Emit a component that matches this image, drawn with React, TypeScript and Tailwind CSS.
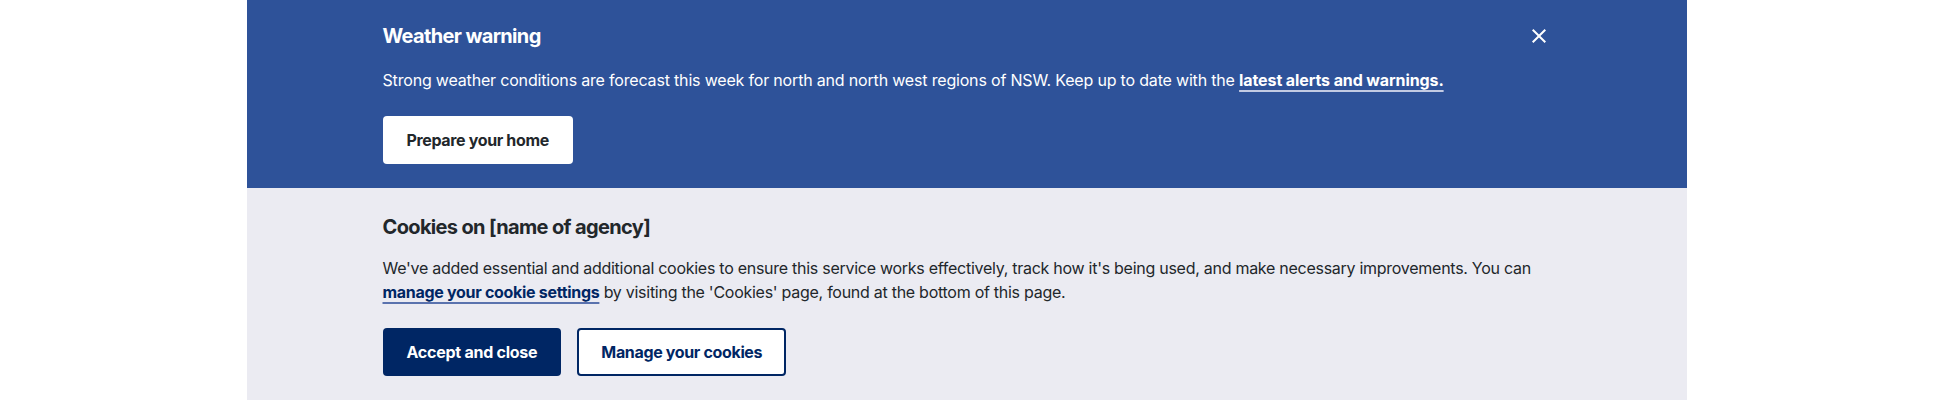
import React from "react";

function CloseIcon() {
  return (
    <svg viewBox="0 0 24 24" width="24" height="24" fill="currentColor" aria-hidden="true">
      <path d="M19 6.41L17.59 5 12 10.59 6.41 5 5 6.41 10.59 12 5 17.59 6.41 19 12 13.41 17.59 19 19 17.59 13.41 12z" />
    </svg>
  );
}

export default function App() {
  return (
    <div className="min-h-[400px] bg-white font-['Inter',sans-serif] tracking-[-0.2px] antialiased">
      <div className="mx-auto max-w-[1440px]">
        <section className="bg-[#2e5299] text-white">
          <div className="mx-auto flex max-w-[1200px] items-start gap-4 px-4 py-6">
            <div className="flex-1">
              <h2 className="text-[20px] font-bold leading-[25px] tracking-[-0.65px]">Weather warning</h2>
              <p className="mt-[19px] text-base leading-6 tracking-[-0.18px]">
                Strong weather conditions are forecast this week for north and north west regions of NSW. Keep up to date with the{" "}
                <a
                  href="#"
                  className="font-bold tracking-[-0.1px] underline decoration-[#c3cbe3] decoration-2 underline-offset-[4px]"
                >
                  latest alerts and warnings.
                </a>
              </p>
              <div className="mt-6 flex">
                <a
                  href="#"
                  className="flex h-12 items-center rounded-[4px] bg-white px-6 text-base font-bold tracking-[-0.35px] text-[#22272b]"
                >
                  Prepare your home
                </a>
              </div>
            </div>
            <button type="button" aria-label="Close" className="flex h-6 w-6 items-center justify-center text-white">
              <CloseIcon />
            </button>
          </div>
        </section>
        <section className="bg-[#ebebf2] text-[#22272b]">
          <div className="mx-auto max-w-[1200px] px-4 pb-6 pt-[27px]">
            <h2 className="text-[20px] font-bold leading-[25px] tracking-[-0.65px]">Cookies on [name of agency]</h2>
            <p className="mt-4 text-base leading-6 tracking-[-0.27px]">
              We've added essential and additional cookies to ensure this service works effectively, track how it's being used, and make necessary improvements. You can{" "}
              <a
                href="#"
                className="font-bold tracking-[-0.3px] text-[#002664] underline decoration-[#5a72ae] decoration-2 underline-offset-[4px]"
              >
                manage your cookie settings
              </a>{" "}
              by visiting the 'Cookies' page, found at the bottom of this page.
            </p>
            <div className="mt-6 flex gap-4">
              <button
                type="button"
                className="flex h-12 items-center rounded-[4px] bg-[#002664] px-6 text-base font-bold tracking-[-0.25px] text-white"
              >
                Accept and close
              </button>
              <button
                type="button"
                className="flex h-12 items-center rounded-[4px] border-2 border-[#002664] bg-white px-[22px] text-base font-bold tracking-[-0.35px] text-[#002664]"
              >
                Manage your cookies
              </button>
            </div>
          </div>
        </section>
      </div>
    </div>
  );
}
